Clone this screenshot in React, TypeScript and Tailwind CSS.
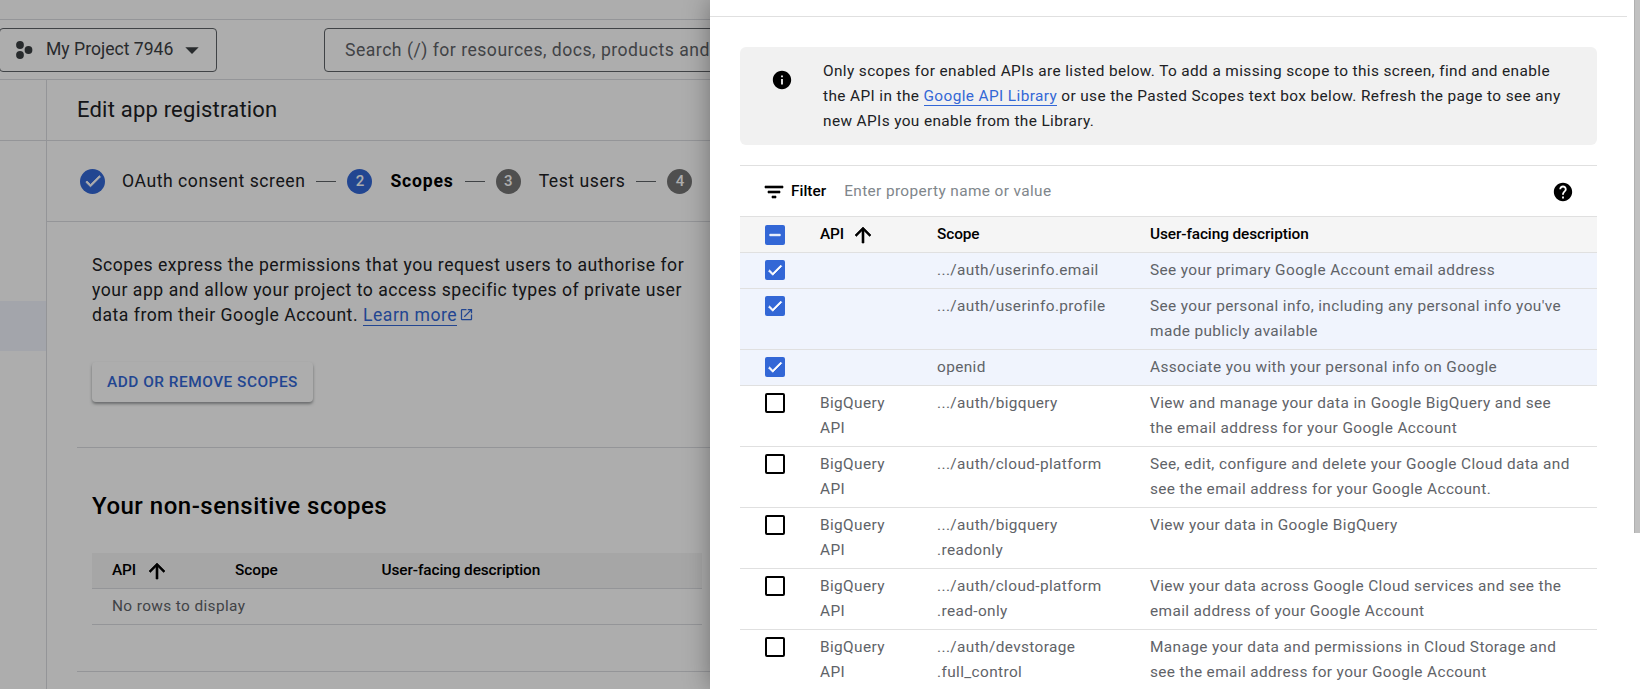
import { MdArrowDropDown, MdHelp, MdInfo, MdOpenInNew } from "react-icons/md";

type Row = {
  api?: string;
  scope: string;
  description: string;
  selected?: boolean;
};

const rows: Row[] = [
  { scope: ".../auth/userinfo.email", description: "See your primary Google Account email address", selected: true },
  {
    scope: ".../auth/userinfo.profile",
    description: "See your personal info, including any personal info you've made publicly available",
    selected: true,
  },
  { scope: "openid", description: "Associate you with your personal info on Google", selected: true },
  {
    api: "BigQuery API",
    scope: ".../auth/bigquery",
    description: "View and manage your data in Google BigQuery and see the email address for your Google Account",
  },
  {
    api: "BigQuery API",
    scope: ".../auth/cloud-platform",
    description: "See, edit, configure and delete your Google Cloud data and see the email address for your Google Account.",
  },
  { api: "BigQuery API", scope: ".../auth/bigquery\n.readonly", description: "View your data in Google BigQuery" },
  {
    api: "BigQuery API",
    scope: ".../auth/cloud-platform\n.read-only",
    description: "View your data across Google Cloud services and see the email address of your Google Account",
  },
  {
    api: "BigQuery API",
    scope: ".../auth/devstorage\n.full_control",
    description: "Manage your data and permissions in Cloud Storage and see the email address for your Google Account",
  },
];

const CHECK = "M9 16.17L4.83 12l-1.42 1.41L9 19 21 7l-1.41-1.41z";
const ARROW_UP = "M4 12l1.41 1.41L11 7.83V20h2V7.83l5.58 5.59L20 12l-8-8-8 8z";
const FILTER = "M10 18h4v-2h-4v2zM3 6v2h18V6H3zm3 7h12v-2H6v2z";
const MINUS = "M19 13H5v-2h14v2z";

// material glyphs drawn a bit heavier than the icon package gives them
function Glyph({ d, size, weight = 0.6, className }: { d: string; size: number; weight?: number; className?: string }) {
  return (
    <svg width={size} height={size} viewBox="0 0 24 24" className={className}>
      <path d={d} fill="currentColor" stroke="currentColor" strokeWidth={weight} />
    </svg>
  );
}

function StepCircle({ n, active }: { n: string; active?: boolean }) {
  return (
    <div
      className={`flex h-[25px] w-[25px] shrink-0 items-center justify-center rounded-full text-[15px] font-medium tracking-normal text-white ${
        active ? "bg-[#3367d6]" : "bg-[#757575]"
      }`}
    >
      {n}
    </div>
  );
}

function Dash() {
  return <div className="mx-[11px] h-px w-[20px] shrink-0 bg-[#5f6368]" />;
}

function Checkbox({ checked }: { checked: boolean }) {
  if (!checked) {
    return <div className="h-[20px] w-[20px] rounded-[2px] border-2 border-black bg-white" />;
  }
  return (
    <div className="flex h-[20px] w-[20px] items-center justify-center rounded-[2px] bg-[#3367d6] text-white">
      <Glyph d={CHECK} size={18} weight={1} />
    </div>
  );
}

function BackgroundPage() {
  return (
    <div className="h-full bg-white text-[#202124]">
      <div className="h-[20px] border-b border-[#dadce0]" />
      <div className="flex h-[60px] items-center border-b border-[#dadce0]">
        <div className="-ml-px flex h-[44px] w-[218px] shrink-0 items-center rounded-[4px] border border-[#5f6368] pl-[15px] text-[#3c4043]">
          <svg width="18" height="20" viewBox="0 0 18 20" className="shrink-0 text-[#3c4043]">
            <circle cx="5" cy="5" r="3.9" fill="currentColor" />
            <circle cx="5" cy="15" r="3.9" fill="currentColor" />
            <circle cx="13.5" cy="10" r="3.9" fill="currentColor" />
          </svg>
          <span className="ml-[13px] text-[17.6px] whitespace-nowrap">My Project 7946</span>
          <MdArrowDropDown size={32} className="ml-[3px] shrink-0" />
        </div>
        <div className="ml-[107px] flex h-[44px] w-[800px] shrink-0 items-center rounded-[4px] border border-[#5f6368] pt-[1px] pl-[20px] text-[17.6px] tracking-[0.5px] whitespace-nowrap text-[#5f6368]">
          Search (/) for resources, docs, products and APIs
        </div>
      </div>
      <div className="flex h-[609px]">
        <div className="w-[47px] shrink-0 border-r border-[#dadce0]">
          <div className="h-[61px] border-b border-[#dadce0]" />
          <div className="mt-[160px] h-[50px] bg-[#f0f3fc]" />
        </div>
        <div className="min-w-0 flex-1">
          <div className="flex h-[61px] items-center border-b border-[#dadce0] pb-[2px] pl-[30px] text-[22px] tracking-[0.2px]">
            Edit app registration
          </div>
          <div className="flex h-[81px] items-center border-b border-[#dadce0] pl-[33px] text-[17.6px] tracking-[0.55px] whitespace-nowrap">
            <div className="flex h-[25px] w-[25px] shrink-0 items-center justify-center rounded-full bg-[#3367d6] text-white">
              <Glyph d={CHECK} size={20} weight={1} />
            </div>
            <span className="ml-[17px]">OAuth consent screen</span>
            <Dash />
            <StepCircle n="2" active />
            <span className="ml-[18px] font-bold tracking-[0.8px] text-black">Scopes</span>
            <Dash />
            <StepCircle n="3" />
            <span className="ml-[18px]">Test users</span>
            <Dash />
            <StepCircle n="4" />
          </div>
          <div className="pl-[45px]">
            <p className="w-[600px] pt-[31px] text-[17.6px] leading-[25px] tracking-[0.52px]">
              Scopes express the permissions that you request users to authorise for your app and allow your project to access
              specific types of private user data from their Google Account.{" "}
              <a className="border-b border-[#3367d6] text-[#3367d6]">Learn more</a>
              <MdOpenInNew size={15} className="ml-[2px] inline align-[-1px] text-[#3367d6]" />
            </p>
            <button className="mt-[34px] flex h-[40px] w-[221px] items-center justify-center rounded-[4px] bg-white pt-[1px] text-[15.4px] font-medium tracking-[0.5px] text-[#3367d6] shadow-[0_2px_3px_rgba(60,64,67,0.5)]">
              ADD OR REMOVE SCOPES
            </button>
          </div>
          <div className="mt-[45px] ml-[30px] h-px bg-[#dadce0]" />
          <div className="pl-[45px]">
            <h2 className="mt-[42px] text-[24px] leading-[32px] font-medium tracking-[0.5px] text-black">Your non-sensitive scopes</h2>
            <div className="mt-[31px] flex h-[36px] w-[610px] items-center border-b border-[#dadce0] bg-[#f5f5f5] pl-[20px] text-[15.4px] font-medium tracking-[-0.1px] text-black">
              <span>API</span>
              <Glyph d={ARROW_UP} size={24} className="ml-[9px]" />
              <span className="ml-[66px]">Scope</span>
              <span className="ml-[104px]">User-facing description</span>
            </div>
            <div className="flex h-[36px] w-[610px] items-center border-b border-[#dadce0] pt-[1px] pl-[20px] text-[15.4px] tracking-[0.38px] text-[#5f6368]">
              No rows to display
            </div>
          </div>
          <div className="mt-[46px] ml-[30px] h-px bg-[#dadce0]" />
        </div>
      </div>
    </div>
  );
}

function ScopesPanel() {
  return (
    <div className="absolute top-0 right-0 bottom-0 flex w-[930px] bg-white shadow-[0_0_24px_rgba(0,0,0,0.35)]">
      <div className="w-[917px] shrink-0">
        <div className="h-[17px] border-b border-[#e0e0e0]" />
        <div className="px-[30px] pt-[30px]">
          <div className="flex h-[98px] rounded-[6px] bg-[#f1f1f1] pr-[24px] text-[15.4px] leading-[25px] tracking-[0.38px] text-[#202124]">
            <MdInfo size={22} className="mt-[22px] ml-[31px] shrink-0 text-black" />
            <p className="ml-[30px] pt-[12px]">
              Only scopes for enabled APIs are listed below. To add a missing scope to this screen, find and enable the API in the{" "}
              <a className="border-b border-[#3367d6] text-[#3367d6]">Google API Library</a> or use the Pasted Scopes text box below.
              Refresh the page to see any new APIs you enable from the Library.
            </p>
          </div>
          <div className="mt-[20px] flex h-[51px] items-center border-t border-[#e0e0e0] pt-[1px] pl-[22px] text-[15.4px]">
            <Glyph d={FILTER} size={24} className="shrink-0 text-black" />
            <span className="ml-[5px] font-medium text-black">Filter</span>
            <span className="ml-[18px] tracking-[0.38px] text-[#80868b]">Enter property name or value</span>
            <MdHelp size={22} className="mr-[23px] ml-auto shrink-0 text-black" />
          </div>
          <div className="grid h-[37px] grid-cols-[80px_117px_213px_1fr] items-center border-t border-b border-[#e0e0e0] bg-[#f5f5f5] text-[15.4px] font-medium tracking-[-0.1px] text-black">
            <div className="pl-[25px]">
              <div className="flex h-[20px] w-[20px] items-center justify-center rounded-[2px] bg-[#3367d6] text-white">
                <Glyph d={MINUS} size={18} weight={1} />
              </div>
            </div>
            <div className="flex items-center">
              API
              <Glyph d={ARROW_UP} size={24} className="ml-[7px]" />
            </div>
            <div>Scope</div>
            <div>User-facing description</div>
          </div>
          {rows.map((row) => (
            <div
              key={row.scope}
              className={`grid grid-cols-[80px_117px_213px_1fr] border-b border-[#e0e0e0] py-[5px] text-[15.4px] leading-[25px] tracking-[0.38px] text-[#5f6368] ${
                row.selected ? "bg-[#f0f4fd]" : "bg-white"
              }`}
            >
              <div className="pt-[2px] pl-[25px]">
                <Checkbox checked={!!row.selected} />
              </div>
              <div className="pr-[40px]">{row.api}</div>
              <div className="whitespace-pre-line">{row.scope}</div>
              <div className="pr-[20px]">{row.description}</div>
            </div>
          ))}
        </div>
      </div>
      <div className="ml-[7px] w-[6px] shrink-0 self-start">
        <div className="h-[533px] border-l border-[#b0b0b0] bg-[#c1c1c1]" />
      </div>
    </div>
  );
}

export default function App() {
  return (
    <div className="relative h-[689px] w-[1640px] overflow-hidden font-['Roboto',sans-serif]">
      <BackgroundPage />
      <div className="absolute inset-0 bg-black/32" />
      <ScopesPanel />
    </div>
  );
}
